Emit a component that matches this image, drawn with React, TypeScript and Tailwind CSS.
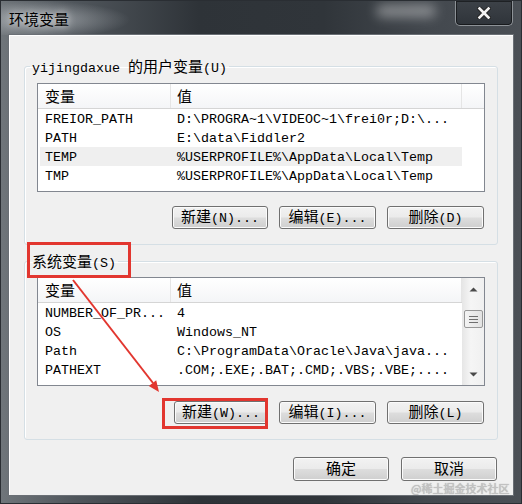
import React from 'react';

const CJK = /([\u4e00-\u9fff]+)/;

// Mixed Latin/CJK text: Latin in the mono font, CJK runs a bit larger like SimSun full-width
const Txt = ({ s }: { s: string }) => (
  <>
    {s.split(CJK).map((part, i) =>
      CJK.test(part) ? (
        <span key={i} className="font-['Noto_Sans_CJK_SC',sans-serif] text-[15px] leading-[16px]">
          {part}
        </span>
      ) : (
        <React.Fragment key={i}>{part}</React.Fragment>
      )
    )}
  </>
);

const userVars: [string, string][] = [
  ['FREIOR_PATH', 'D:\\PROGRA~1\\VIDEOC~1\\frei0r;D:\\...'],
  ['PATH', 'E:\\data\\Fiddler2'],
  ['TEMP', '%USERPROFILE%\\AppData\\Local\\Temp'],
  ['TMP', '%USERPROFILE%\\AppData\\Local\\Temp'],
];

const sysVars: [string, string][] = [
  ['NUMBER_OF_PR...', '4'],
  ['OS', 'Windows_NT'],
  ['Path', 'C:\\ProgramData\\Oracle\\Java\\java...'],
  ['PATHEXT', '.COM;.EXE;.BAT;.CMD;.VBS;.VBE;....'],
];

const Button = ({ label, w = 'w-[97px]', h = 'h-[23px]' }: { label: string; w?: string; h?: string }) => (
  <button
    className={`${w} ${h} flex items-center justify-center rounded-[3px] border border-[#707070] bg-[linear-gradient(#f2f2f2_0%,#ebebeb_48%,#dddddd_52%,#cfcfcf_100%)] text-black shadow-[inset_0_0_0_1px_#fbfbfb]`}
  >
    <span className="whitespace-nowrap leading-[16px]">
      <Txt s={label} />
    </span>
  </button>
);

const Arrow = ({ down }: { down?: boolean }) => (
  <svg width="9" height="5" viewBox="0 0 9 5">
    {down ? <path d="M0.5 0.5 L8.5 0.5 L4.5 4.5 Z" fill="#4a4a4a" /> : <path d="M0.5 4.5 L8.5 4.5 L4.5 0.5 Z" fill="#4a4a4a" />}
  </svg>
);

const ScrollBar = () => (
  <div className="flex w-[22px] flex-col items-center bg-[linear-gradient(90deg,#e6e6e6,#f5f5f5_40%,#f0f0f0)]">
    <div className="flex h-[22px] w-full items-center justify-center">
      <Arrow />
    </div>
    <div className="mt-[10px] flex h-[18px] w-[19px] flex-col items-center justify-center gap-[2px] rounded-[2px] border border-[#979797] bg-[linear-gradient(90deg,#f3f3f3,#e2e2e2)]">
      <div className="h-px w-[9px] bg-[#6f6f6f]" />
      <div className="h-px w-[9px] bg-[#6f6f6f]" />
      <div className="h-px w-[9px] bg-[#6f6f6f]" />
    </div>
    <div className="flex-1" />
    <div className="flex h-[22px] w-full items-center justify-center">
      <Arrow down />
    </div>
  </div>
);

const ListView = ({ rows, highlight, scroll }: { rows: [string, string][]; highlight?: number; scroll?: boolean }) => (
  <div className="ml-[7px] flex h-[109px] w-[448px] overflow-hidden border border-[#828790] bg-white">
    <div className="min-w-0 flex-1">
      <div className="flex h-[25px] border-b border-[#d5d5d5] bg-[linear-gradient(#ffffff,#f4f5f7)]">
        <div className="flex w-[133px] items-center border-r border-[#e5e5e5] pl-[7px]">
          <Txt s="变量" />
        </div>
        <div className="flex w-[291px] items-center border-r border-[#e5e5e5] pl-[6px]">
          <Txt s="值" />
        </div>
        <div className="flex-1" />
      </div>
      {rows.map(([name, value], i) => (
        <div
          key={name}
          className={`ml-[2px] flex h-[19px] w-[422px] items-center whitespace-nowrap pt-[2px] ${highlight === i ? 'bg-[#efefef]' : ''}`}
        >
          <div className="w-[131px] pl-[5px]">{name}</div>
          <div className="pl-[6px]">{value}</div>
        </div>
      ))}
    </div>
    {scroll && <ScrollBar />}
  </div>
);

const Group = ({ title, children, className }: { title: string; children: React.ReactNode; className: string }) => (
  <fieldset
    className={`ml-[15px] w-[474px] rounded-[3px] border border-[#d5dfe5] pl-[5px] pb-[15px] shadow-[inset_1px_1px_0_#ffffff] ${className}`}
  >
    <legend className="h-[16px] px-[2px] leading-[16px]">
      <span className="whitespace-pre">
        <Txt s={title} />
      </span>
    </legend>
    {children}
  </fieldset>
);

const App: React.FC = () => {
  return (
    <div className="relative h-[504px] w-[522px] overflow-hidden border border-[#2a2e33] bg-[linear-gradient(90deg,#6f757a_0%,#50565c_14%,#2e3338_38%,#30353a_62%,#43484e_82%,#4a4f55_100%)] font-['Liberation_Mono','Noto_Sans_CJK_SC',monospace] text-[13.33px] leading-[19px] text-black">
      {/* glass reflections */}
      <div className="absolute left-[375px] top-[4px] h-[12px] w-[60px] rounded-full bg-white/40 blur-[6px]" />
      <div className="absolute left-0 top-0 h-[34px] w-[130px] bg-[radial-gradient(ellipse_at_30%_55%,rgba(210,214,218,0.55),transparent_70%)]" />

      {/* title bar */}
      <div className="relative flex h-[33px] items-start justify-between">
        <div className="pl-[8px] pt-[8px] font-['Noto_Sans_CJK_SC',sans-serif] text-[15px] leading-[20px] text-black [text-shadow:0_0_8px_rgba(255,255,255,0.9)]">
          环境变量
        </div>
        <div className="mr-[8px] flex h-[25px] w-[58px] items-center justify-center rounded-b-[5px] border border-t-0 border-[#8d9297] bg-[linear-gradient(#3d4248,#2f343a)] shadow-[inset_0_0_0_1px_rgba(0,0,0,0.5)]">
          <svg width="14" height="12" viewBox="0 0 14 12">
            <path d="M2.5 1.5 L11.5 10.5 M11.5 1.5 L2.5 10.5" stroke="#222" strokeWidth="4.5" strokeLinecap="square" />
            <path d="M2.5 1.5 L11.5 10.5 M11.5 1.5 L2.5 10.5" stroke="#f2f2f2" strokeWidth="2.6" strokeLinecap="square" />
          </svg>
        </div>
      </div>

      {/* client panel */}
      <div className="relative ml-[7px] flex h-[462px] w-[506px] flex-col border border-[#6a6f75] bg-[#f0f0f0] shadow-[inset_1px_1px_0_#ffffff]">
        <Group title="yijingdaxue 的用户变量(U)" className="mt-[23px]">
          <div className="mt-[9px]">
            <ListView rows={userVars} highlight={2} />
          </div>
          <div className="mt-[14px] flex justify-end gap-[11px] pr-[13px]">
            <Button label="新建(N)..." w="w-[96px]" />
            <Button label="编辑(E)..." />
            <Button label="删除(D)" />
          </div>
        </Group>

        <Group title="系统变量(S)" className="mt-[8px]">
          <div className="mt-[8px]">
            <ListView rows={sysVars} scroll />
          </div>
          <div className="mt-[15px] flex justify-end gap-[11px] pr-[13px]">
            <Button label="新建(W)..." w="w-[94px]" />
            <Button label="编辑(I)..." />
            <Button label="删除(L)" />
          </div>
        </Group>

        <div className="mt-[17px] flex justify-end gap-[12px] pr-[16px]">
          <Button label="确定" w="w-[96px]" h="h-[24px]" />
          <Button label="取消" w="w-[96px]" h="h-[24px]" />
        </div>
      </div>

      {/* annotations */}
      <div className="absolute left-[26px] top-[241px] h-[36px] w-[104px] border-[3px] border-[#e2362f]" />
      <div className="absolute left-[161px] top-[397px] h-[31px] w-[106px] border-[3px] border-[#e2362f]" />
      <svg className="absolute left-0 top-0" width="522" height="504" viewBox="0 0 522 504">
        <line x1="72" y1="279" x2="152" y2="382" stroke="#e2362f" strokeWidth="2" />
        <path d="M158 391 L155.2 379.2 L147.8 385 Z" fill="#e2362f" />
      </svg>
      <div className="absolute left-[410px] top-[480px] font-['Noto_Sans_CJK_SC',sans-serif] text-[11px] leading-[14px] text-[#c4c4c4] [text-shadow:0_0_1px_rgba(90,90,90,0.6)]">
        @稀土掘金技术社区
      </div>
    </div>
  );
};

export default App;
